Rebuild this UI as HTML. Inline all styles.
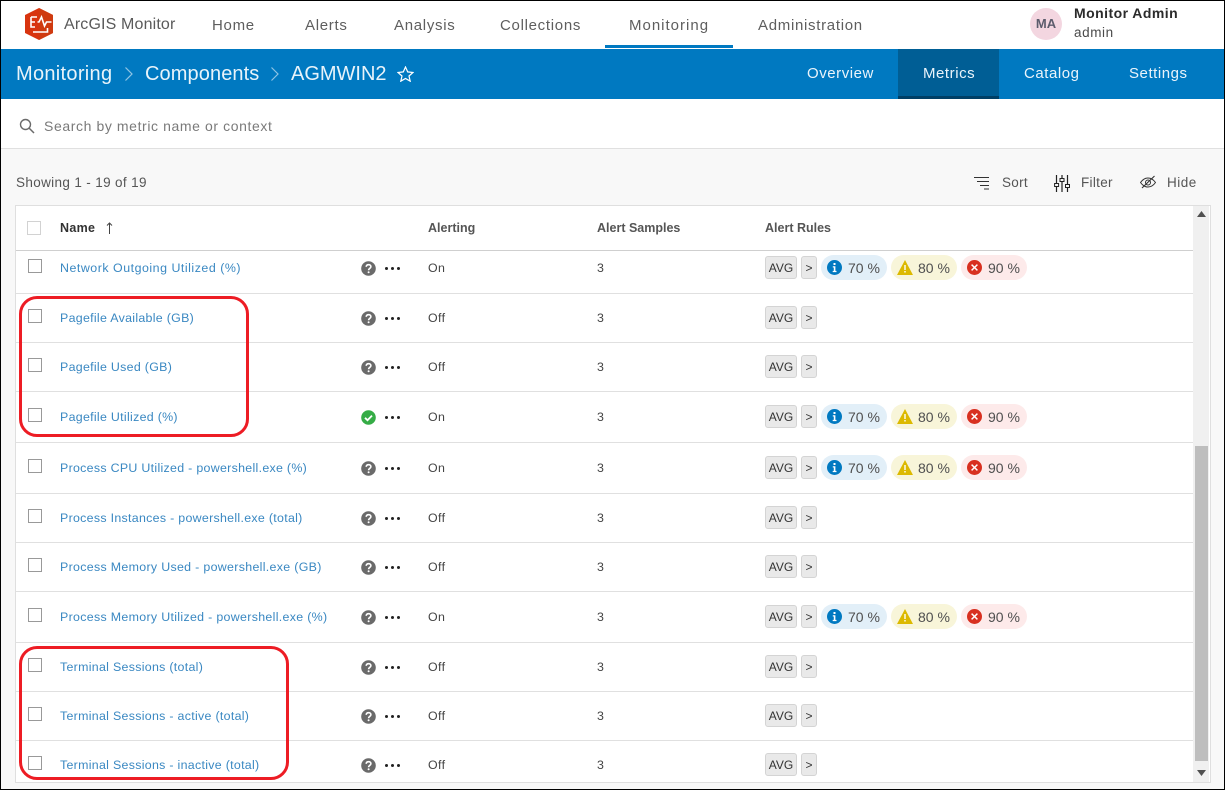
<!DOCTYPE html>
<html><head><meta charset="utf-8"><title>ArcGIS Monitor</title>
<style>
html,body{margin:0;padding:0;width:1226px;height:791px;overflow:hidden;background:#f8f8f8;font-family:"Liberation Sans",sans-serif}
div,span,svg{position:absolute;white-space:nowrap}
.t{line-height:20px;transform:translateY(-10px)}
.nav{top:25.500px;font-size:15px;color:#5e5e5e;letter-spacing:.7px}
.sub{top:74px;font-size:15px;color:#eaf4fb;letter-spacing:.55px}
.crumb{top:74px;font-size:20px;color:#e8f3fa}
.h{font-size:12.5px;color:#323232;top:228px}
.tool{top:183px;font-size:13.500px;color:#555;letter-spacing:.3px}
.line{left:16px;width:1177px;height:1px;background:#e0e0e0}
.r{left:0;width:0;height:0}
.cb{left:28px;top:-9px;width:12px;height:12px;border:1.500px solid #999;background:#fff}
.n{left:60px;font-size:12.400px;color:#3a88c2;line-height:20px;top:-10px;letter-spacing:.3px}
.q{left:361px;top:-7px}
.d{left:385px;top:-1.500px;width:3px;height:3px;border-radius:50%;background:#222;box-shadow:6px 0 0 #222,12px 0 0 #222}
.o{left:428px;font-size:12.400px;color:#444;line-height:20px;top:-10px;letter-spacing:.4px}
.s{left:597px;font-size:12.400px;color:#444;line-height:20px;top:-10px}
.avg{left:765px;top:-12px;width:30px;height:21px;border:1px solid #d4d4d4;border-radius:3px;background:#e9e9e9;color:#333;font-size:12px;line-height:23px;text-align:center}
.gt{left:801px;top:-12px;width:14px;height:21px;border:1px solid #d4d4d4;border-radius:3px;background:#e9e9e9;color:#333;font-size:12px;line-height:23px;text-align:center}
.p{top:-13px;width:66px;height:25px;border-radius:13px;font-size:14px;color:#4f4f4f;line-height:27px}
.p span{left:27px;top:0}
.p svg{left:6px;top:5px}
.p1{left:821px;background:#e2eff8}.p2{left:891px;background:#f8f5d9}.p3{left:961px;background:#fdeaea}
.red{border:3px solid #ed1c24;border-radius:18px;background:transparent;box-sizing:border-box}
</style></head><body>
<svg width="0" height="0" style="left:0;top:0"><defs>
<symbol id="q" viewBox="0 0 15 15"><circle cx="7.500" cy="7.500" r="7.300" fill="#6a6a6a"/><path d="M5.200 5.800C5.300 4.400 6.300 3.700 7.600 3.700c1.400 0 2.300.8 2.300 1.900 0 1.800-2.300 1.800-2.300 3.600" fill="none" stroke="#fff" stroke-width="1.600"/><circle cx="7.600" cy="11.200" r="1" fill="#fff"/></symbol>
<symbol id="ok" viewBox="0 0 15 15"><circle cx="7.500" cy="7.500" r="7.300" fill="#35ac46"/><path d="M4 7.800l2.500 2.400L11 5.600" fill="none" stroke="#fff" stroke-width="1.800"/></symbol>
<symbol id="i" viewBox="0 0 15 15"><circle cx="7.500" cy="7.500" r="7.500" fill="#0079c1"/><rect x="6.500" y="3" width="2" height="2" fill="#fff"/><path d="M5.800 6.300h2.600v4.600h1.100v1.200H5.700v-1.200h1.100V7.500H5.800z" fill="#fff"/></symbol>
<symbol id="w" viewBox="0 0 16 15"><path d="M8 0l8 15H0z" fill="#dcb900"/><rect x="7.300" y="5" width="1.400" height="5" fill="#fff"/><rect x="7.300" y="11" width="1.400" height="1.500" fill="#fff"/></symbol>
<symbol id="x" viewBox="0 0 15 15"><circle cx="7.500" cy="7.500" r="7.500" fill="#d83020"/><path d="M4.600 4.600l5.800 5.800M10.400 4.600l-5.800 5.800" stroke="#fff" stroke-width="1.500"/></symbol>
</defs></svg>

<!-- header -->
<div style="left:0;top:0;width:1226px;height:49px;background:#fff"></div>
<svg style="left:25px;top:8px" width="28" height="32" viewBox="0 0 28 32"><path d="M14 0L28 7v18L14 32 0 25V7z" fill="#d8340f"/><path d="M14 0L28 7v18L14 32z" fill="#cf3a10"/><path d="M6 9h6M6 9v5h4M6 14v5h4M12.500 14h1.500l2.500-5 3 9 2-4h5M8 24h14.500v-4" fill="none" stroke="#fff" stroke-width="1.600"/></svg>
<div class="t" style="left:64px;top:25px;font-size:16px;color:#5a5a5a;letter-spacing:.15px">ArcGIS Monitor</div>
<div class="t nav" style="left:212px">Home</div>
<div class="t nav" style="left:305px">Alerts</div>
<div class="t nav" style="left:394px">Analysis</div>
<div class="t nav" style="left:500px">Collections</div>
<div class="t nav" style="left:629px;letter-spacing:1px">Monitoring</div>
<div class="t nav" style="left:758px">Administration</div>
<div style="left:605px;top:45px;width:128px;height:3px;background:#0079c1"></div>
<div style="left:1030px;top:8px;width:32px;height:32px;border-radius:50%;background:#f3d6e0;color:#5c5c6c;font-size:13px;font-weight:bold;line-height:32px;text-align:center">MA</div>
<div class="t" style="left:1074px;top:13px;font-size:14px;font-weight:bold;color:#2b2b2b;letter-spacing:.45px">Monitor Admin</div>
<div class="t" style="left:1074px;top:33px;font-size:13.500px;color:#4a4a4a;letter-spacing:.6px">admin</div>

<!-- blue bar -->
<div style="left:0;top:49px;width:1226px;height:50px;background:#0079c1"></div>
<div class="t crumb" style="left:16px;letter-spacing:.3px">Monitoring</div>
<svg style="left:124px;top:66px" width="10" height="16" viewBox="0 0 10 16"><path d="M1.500 1.500L8 8l-6.500 6.500" fill="none" stroke="#8fc4e4" stroke-width="1.200"/></svg>
<div class="t crumb" style="left:145px;letter-spacing:.1px">Components</div>
<svg style="left:270px;top:66px" width="10" height="16" viewBox="0 0 10 16"><path d="M1.500 1.500L8 8l-6.500 6.500" fill="none" stroke="#8fc4e4" stroke-width="1.200"/></svg>
<div class="t crumb" style="left:291px">AGMWIN2</div>
<svg style="left:397px;top:66px" width="17" height="16" viewBox="0 0 17 16"><path d="M8.500 1l2.200 4.900 5.300.6-4 3.500 1.200 5.200-4.700-2.700-4.700 2.700L5 10 1 6.500l5.300-.6z" fill="none" stroke="#fff" stroke-width="1.200"/></svg>
<div style="left:898px;top:49px;width:101px;height:50px;background:#005e95"></div>
<div style="left:898px;top:96px;width:101px;height:3px;background:#003f66"></div>
<div class="t sub" style="left:807px">Overview</div>
<div class="t sub" style="left:923px">Metrics</div>
<div class="t sub" style="left:1024px">Catalog</div>
<div class="t sub" style="left:1129px">Settings</div>

<!-- search -->
<div style="left:0;top:99px;width:1226px;height:49px;background:#fff"></div>
<div style="left:0;top:148px;width:1226px;height:1px;background:#e0e0e0"></div>
<svg style="left:19px;top:118px" width="16" height="16" viewBox="0 0 16 16"><circle cx="6.500" cy="6.500" r="5" fill="none" stroke="#6a6a6a" stroke-width="1.400"/><path d="M10 10l5 5" stroke="#6a6a6a" stroke-width="1.500"/></svg>
<div class="t" style="left:44px;top:126px;font-size:14px;color:#7a7a7a;letter-spacing:.6px">Search by metric name or context</div>

<!-- toolbar -->
<div class="t" style="left:16px;top:183px;font-size:13.500px;color:#555;letter-spacing:.35px">Showing 1 - 19 of 19</div>
<svg style="left:974px;top:176px" width="15" height="14" viewBox="0 0 15 14"><path d="M0 1.500h15M3 5.500h12M6 9.500h9M10 13h5" stroke="#333" stroke-width="1"/></svg>
<div class="t tool" style="left:1002px">Sort</div>
<svg style="left:1054px;top:175px" width="16" height="17" viewBox="0 0 16 17"><path d="M2.500 0v8M2.500 12v5M8 0v3M8 7v10M13.500 0v9M13.500 13v4" stroke="#222" stroke-width="1.200"/><rect x=".6" y="8.500" width="4" height="3" fill="none" stroke="#222"/><rect x="6" y="3.500" width="4" height="3" fill="none" stroke="#222"/><rect x="11.500" y="9.500" width="4" height="3" fill="none" stroke="#222"/></svg>
<div class="t tool" style="left:1081px">Filter</div>
<svg style="left:1140px;top:175px" width="16" height="14" viewBox="0 0 16 14"><path d="M.5 7.500C3 4 5.500 3 8 3s5 1 7.500 4.500C13 11 10.500 12 8 12S3 11 .5 7.500z" fill="none" stroke="#333"/><circle cx="8" cy="7.500" r="2.500" fill="none" stroke="#333"/><path d="M2 13L14.500 1" stroke="#333" stroke-width="1.100"/></svg>
<div class="t tool" style="left:1167px;letter-spacing:.5px">Hide</div>

<!-- table -->
<div style="left:15px;top:205px;width:1194px;height:576px;background:#fff;border:1px solid #dfdfdf"></div>
<div style="left:1193px;top:206px;width:16px;height:576px;background:#f0f0f0"></div>
<div style="left:1195px;top:446px;width:13px;height:315px;background:#bebebe"></div>
<svg style="left:1197px;top:211px" width="9" height="6" viewBox="0 0 9 6"><path d="M4.500 0L9 6H0z" fill="#505050"/></svg>
<svg style="left:1197px;top:770px" width="9" height="6" viewBox="0 0 9 6"><path d="M4.500 6L9 0H0z" fill="#505050"/></svg>

<div style="left:27px;top:221px;width:12px;height:12px;border:1.500px solid #d2d2d2;background:#fff"></div>
<div class="t h" style="left:60px;font-weight:bold;letter-spacing:.3px">Name</div>
<svg style="left:106px;top:222px" width="7" height="12" viewBox="0 0 7 12"><path d="M3.500 1v11M1 3.500L3.500 1 6 3.500" fill="none" stroke="#444"/></svg>
<div class="t h" style="left:428px;font-weight:bold;color:#555">Alerting</div>
<div class="t h" style="left:597px;font-weight:bold;color:#555">Alert Samples</div>
<div class="t h" style="left:765px;font-weight:bold;color:#555">Alert Rules</div>
<div style="left:16px;top:250px;width:1177px;height:1px;background:#cfcfcf"></div>

<div class="line" style="top:293px"></div>
<div class="line" style="top:342px"></div>
<div class="line" style="top:391px"></div>
<div class="line" style="top:442px"></div>
<div class="line" style="top:493px"></div>
<div class="line" style="top:542px"></div>
<div class="line" style="top:591px"></div>
<div class="line" style="top:642px"></div>
<div class="line" style="top:691px"></div>
<div class="line" style="top:740px"></div>

<div class="r" style="top:268px"><div class="cb"></div><div class="n" style="letter-spacing:.52px">Network Outgoing Utilized (%)</div><svg class="q" width="15" height="15"><use href="#q"/></svg><div class="d"></div><div class="o">On</div><div class="s">3</div><div class="avg">AVG</div><div class="gt">&gt;</div><div class="p p1"><svg width="15" height="15"><use href="#i"/></svg><span>70 %</span></div><div class="p p2"><svg width="16" height="15"><use href="#w"/></svg><span>80 %</span></div><div class="p p3"><svg width="15" height="15"><use href="#x"/></svg><span>90 %</span></div></div>

<div class="r" style="top:318px"><div class="cb"></div><div class="n">Pagefile Available (GB)</div><svg class="q" width="15" height="15"><use href="#q"/></svg><div class="d"></div><div class="o">Off</div><div class="s">3</div><div class="avg">AVG</div><div class="gt">&gt;</div></div>

<div class="r" style="top:367px"><div class="cb"></div><div class="n">Pagefile Used (GB)</div><svg class="q" width="15" height="15"><use href="#q"/></svg><div class="d"></div><div class="o">Off</div><div class="s">3</div><div class="avg">AVG</div><div class="gt">&gt;</div></div>

<div class="r" style="top:417px"><div class="cb"></div><div class="n">Pagefile Utilized (%)</div><svg class="q" width="15" height="15"><use href="#ok"/></svg><div class="d"></div><div class="o">On</div><div class="s">3</div><div class="avg">AVG</div><div class="gt">&gt;</div><div class="p p1"><svg width="15" height="15"><use href="#i"/></svg><span>70 %</span></div><div class="p p2"><svg width="16" height="15"><use href="#w"/></svg><span>80 %</span></div><div class="p p3"><svg width="15" height="15"><use href="#x"/></svg><span>90 %</span></div></div>

<div class="r" style="top:468px"><div class="cb"></div><div class="n">Process CPU Utilized - powershell.exe (%)</div><svg class="q" width="15" height="15"><use href="#q"/></svg><div class="d"></div><div class="o">On</div><div class="s">3</div><div class="avg">AVG</div><div class="gt">&gt;</div><div class="p p1"><svg width="15" height="15"><use href="#i"/></svg><span>70 %</span></div><div class="p p2"><svg width="16" height="15"><use href="#w"/></svg><span>80 %</span></div><div class="p p3"><svg width="15" height="15"><use href="#x"/></svg><span>90 %</span></div></div>

<div class="r" style="top:518px"><div class="cb"></div><div class="n">Process Instances - powershell.exe (total)</div><svg class="q" width="15" height="15"><use href="#q"/></svg><div class="d"></div><div class="o">Off</div><div class="s">3</div><div class="avg">AVG</div><div class="gt">&gt;</div></div>

<div class="r" style="top:567px"><div class="cb"></div><div class="n" style="letter-spacing:.32px">Process Memory Used - powershell.exe (GB)</div><svg class="q" width="15" height="15"><use href="#q"/></svg><div class="d"></div><div class="o">Off</div><div class="s">3</div><div class="avg">AVG</div><div class="gt">&gt;</div></div>

<div class="r" style="top:617px"><div class="cb"></div><div class="n" style="letter-spacing:.32px">Process Memory Utilized - powershell.exe (%)</div><svg class="q" width="15" height="15"><use href="#q"/></svg><div class="d"></div><div class="o">On</div><div class="s">3</div><div class="avg">AVG</div><div class="gt">&gt;</div><div class="p p1"><svg width="15" height="15"><use href="#i"/></svg><span>70 %</span></div><div class="p p2"><svg width="16" height="15"><use href="#w"/></svg><span>80 %</span></div><div class="p p3"><svg width="15" height="15"><use href="#x"/></svg><span>90 %</span></div></div>

<div class="r" style="top:667px"><div class="cb"></div><div class="n">Terminal Sessions (total)</div><svg class="q" width="15" height="15"><use href="#q"/></svg><div class="d"></div><div class="o">Off</div><div class="s">3</div><div class="avg">AVG</div><div class="gt">&gt;</div></div>

<div class="r" style="top:716px"><div class="cb"></div><div class="n">Terminal Sessions - active (total)</div><svg class="q" width="15" height="15"><use href="#q"/></svg><div class="d"></div><div class="o">Off</div><div class="s">3</div><div class="avg">AVG</div><div class="gt">&gt;</div></div>

<div class="r" style="top:765px"><div class="cb"></div><div class="n">Terminal Sessions - inactive (total)</div><svg class="q" width="15" height="15"><use href="#q"/></svg><div class="d"></div><div class="o">Off</div><div class="s">3</div><div class="avg">AVG</div><div class="gt">&gt;</div></div>

<!-- annotations -->
<div class="red" style="left:19px;top:296px;width:230px;height:141px"></div>
<div class="red" style="left:19px;top:646px;width:270px;height:134px"></div>

<!-- frame -->
<div style="left:0;top:0;width:1226px;height:1px;background:#000"></div>
<div style="left:0;top:0;width:1px;height:790px;background:#000"></div>
<div style="left:1224px;top:0;width:1px;height:790px;background:#000"></div>
<div style="left:0;top:789px;width:1225px;height:1px;background:#000"></div>
<div style="left:1225px;top:0;width:1px;height:791px;background:#fff"></div>
<div style="left:0;top:790px;width:1226px;height:1px;background:#fff"></div>
</body></html>
